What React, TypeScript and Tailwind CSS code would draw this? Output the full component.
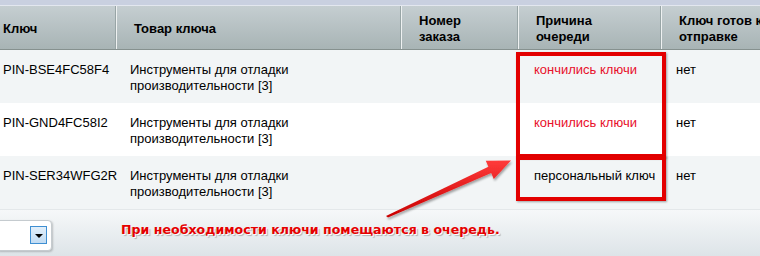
import React from 'react';

const cols = ['w-[116px]', 'w-[285px]', 'w-[117px]', 'w-[143px]', 'w-[120px]'];

type Row = { key: string; reason: string; red: boolean; bg: string };

const rows: Row[] = [
  { key: 'PIN-BSE4FC58F4', reason: 'кончились ключи', red: true, bg: 'bg-[#f2f5f6]' },
  { key: 'PIN-GND4FC58I2', reason: 'кончились ключи', red: true, bg: 'bg-white' },
  { key: 'PIN-SER34WFG2R', reason: 'персональный ключ', red: false, bg: 'bg-[#f2f5f6]' },
];

function HeaderCell({ w, first, children }: { w: string; first?: boolean; children: React.ReactNode }) {
  return (
    <div
      className={`${w} shrink-0 h-full flex items-center pt-[3px] leading-[16px] ${
        first ? 'pl-[3px]' : 'pl-[17px] border-l border-l-[#eef1f1]'
      } border-r border-r-[#98a5a6] whitespace-nowrap overflow-hidden`}
    >
      {children}
    </div>
  );
}

export default function App() {
  return (
    <div
      className="relative w-[760px] h-[256px] overflow-hidden bg-white text-[13px] text-black"
      style={{ fontFamily: '"Liberation Sans", Arial, sans-serif' }}
    >
      <div className="h-[6px] bg-[#c9d0e0] border-b border-b-[#e3e7ef]" />
      <div className="h-[44px] flex font-bold bg-gradient-to-b from-[#c5ced1] to-[#a8b4b5] border-b border-b-[#86918f]">
        <HeaderCell w={cols[0]} first>Ключ</HeaderCell>
        <HeaderCell w={cols[1]}>Товар ключа</HeaderCell>
        <HeaderCell w={cols[2]}>
          Номер
          <br />
          заказа
        </HeaderCell>
        <HeaderCell w={cols[3]}>
          Причина
          <br />
          очереди
        </HeaderCell>
        <HeaderCell w={cols[4]}>
          Ключ готов к
          <br />
          отправке
        </HeaderCell>
      </div>

      {rows.map((r) => (
        <div key={r.key} className={`h-[53px] flex ${r.bg} leading-[16px] pt-[12px]`}>
          <div className={`${cols[0]} shrink-0 pl-[3px] whitespace-nowrap`}>{r.key}</div>
          <div className={`${cols[1]} shrink-0 pl-[14px]`}>
            Инструменты для отладки
            <br />
            производительности [3]
          </div>
          <div className={`${cols[2]} shrink-0`} />
          <div className={`${cols[3]} shrink-0 pl-[16px] whitespace-nowrap ${r.red ? 'text-[#e8102a]' : ''}`}>
            {r.reason}
          </div>
          <div className={`${cols[4]} shrink-0 pl-[15px]`}>нет</div>
        </div>
      ))}

      <div className="h-[47px] flex items-center bg-gradient-to-b from-[#f6f8f9] to-[#dde4e8] border-t border-t-[#e4e8ea]">
        <div className="relative w-[54px] h-[31px] mt-[4px] -ml-[2px] bg-white border border-[#c5cbcf] rounded-r-[4px] shadow-[1px_1px_2px_rgba(0,0,0,0.2)] flex items-center justify-end pr-[4px]">
          <div className="w-[17px] h-[18px] border border-[#3f8fd2] bg-gradient-to-b from-[#e2effa] to-[#c2dcf3] flex items-center justify-center">
            <div className="w-0 h-0 border-l-[4px] border-r-[4px] border-t-[4px] border-l-transparent border-r-transparent border-t-black mt-[2px]" />
          </div>
        </div>
        <div
          className="ml-[69px] mb-[5px] font-bold text-[12.6px] text-[#e60000] [text-shadow:1px_1px_0_#ffffff,2px_2px_1px_rgba(0,0,0,0.25)] whitespace-nowrap"
          style={{ fontFamily: '"DejaVu Sans", Verdana, sans-serif' }}
        >
          При необходимости ключи помещаются в очередь.
        </div>
      </div>

      {/* annotation boxes */}
      <div className="absolute left-[516px] top-[52px] w-[150px] h-[106px] border-[4px] border-[#e30000] shadow-[1px_1px_2px_rgba(0,0,0,0.35)]" />
      <div className="absolute left-[516px] top-[156px] w-[150px] h-[45px] border-[4px] border-[#e30000] shadow-[1px_1px_2px_rgba(0,0,0,0.35)]" />

      <svg className="absolute left-0 top-0 pointer-events-none" width="760" height="256">
        <defs>
          <linearGradient id="ag" x1="0" y1="0" x2="0" y2="1">
            <stop offset="0%" stopColor="#ff3b3b" />
            <stop offset="100%" stopColor="#c80000" />
          </linearGradient>
          <filter id="sh" x="-10%" y="-10%" width="130%" height="140%">
            <feDropShadow dx="1" dy="2" stdDeviation="1.2" floodColor="#000" floodOpacity="0.35" />
          </filter>
        </defs>
        <polygon
          points="386,216 488.4,166.7 485.8,160.7 511,160.5 493.8,179.1 491.2,173.1 388,217.5"
          fill="url(#ag)"
          filter="url(#sh)"
        />
      </svg>
    </div>
  );
}
